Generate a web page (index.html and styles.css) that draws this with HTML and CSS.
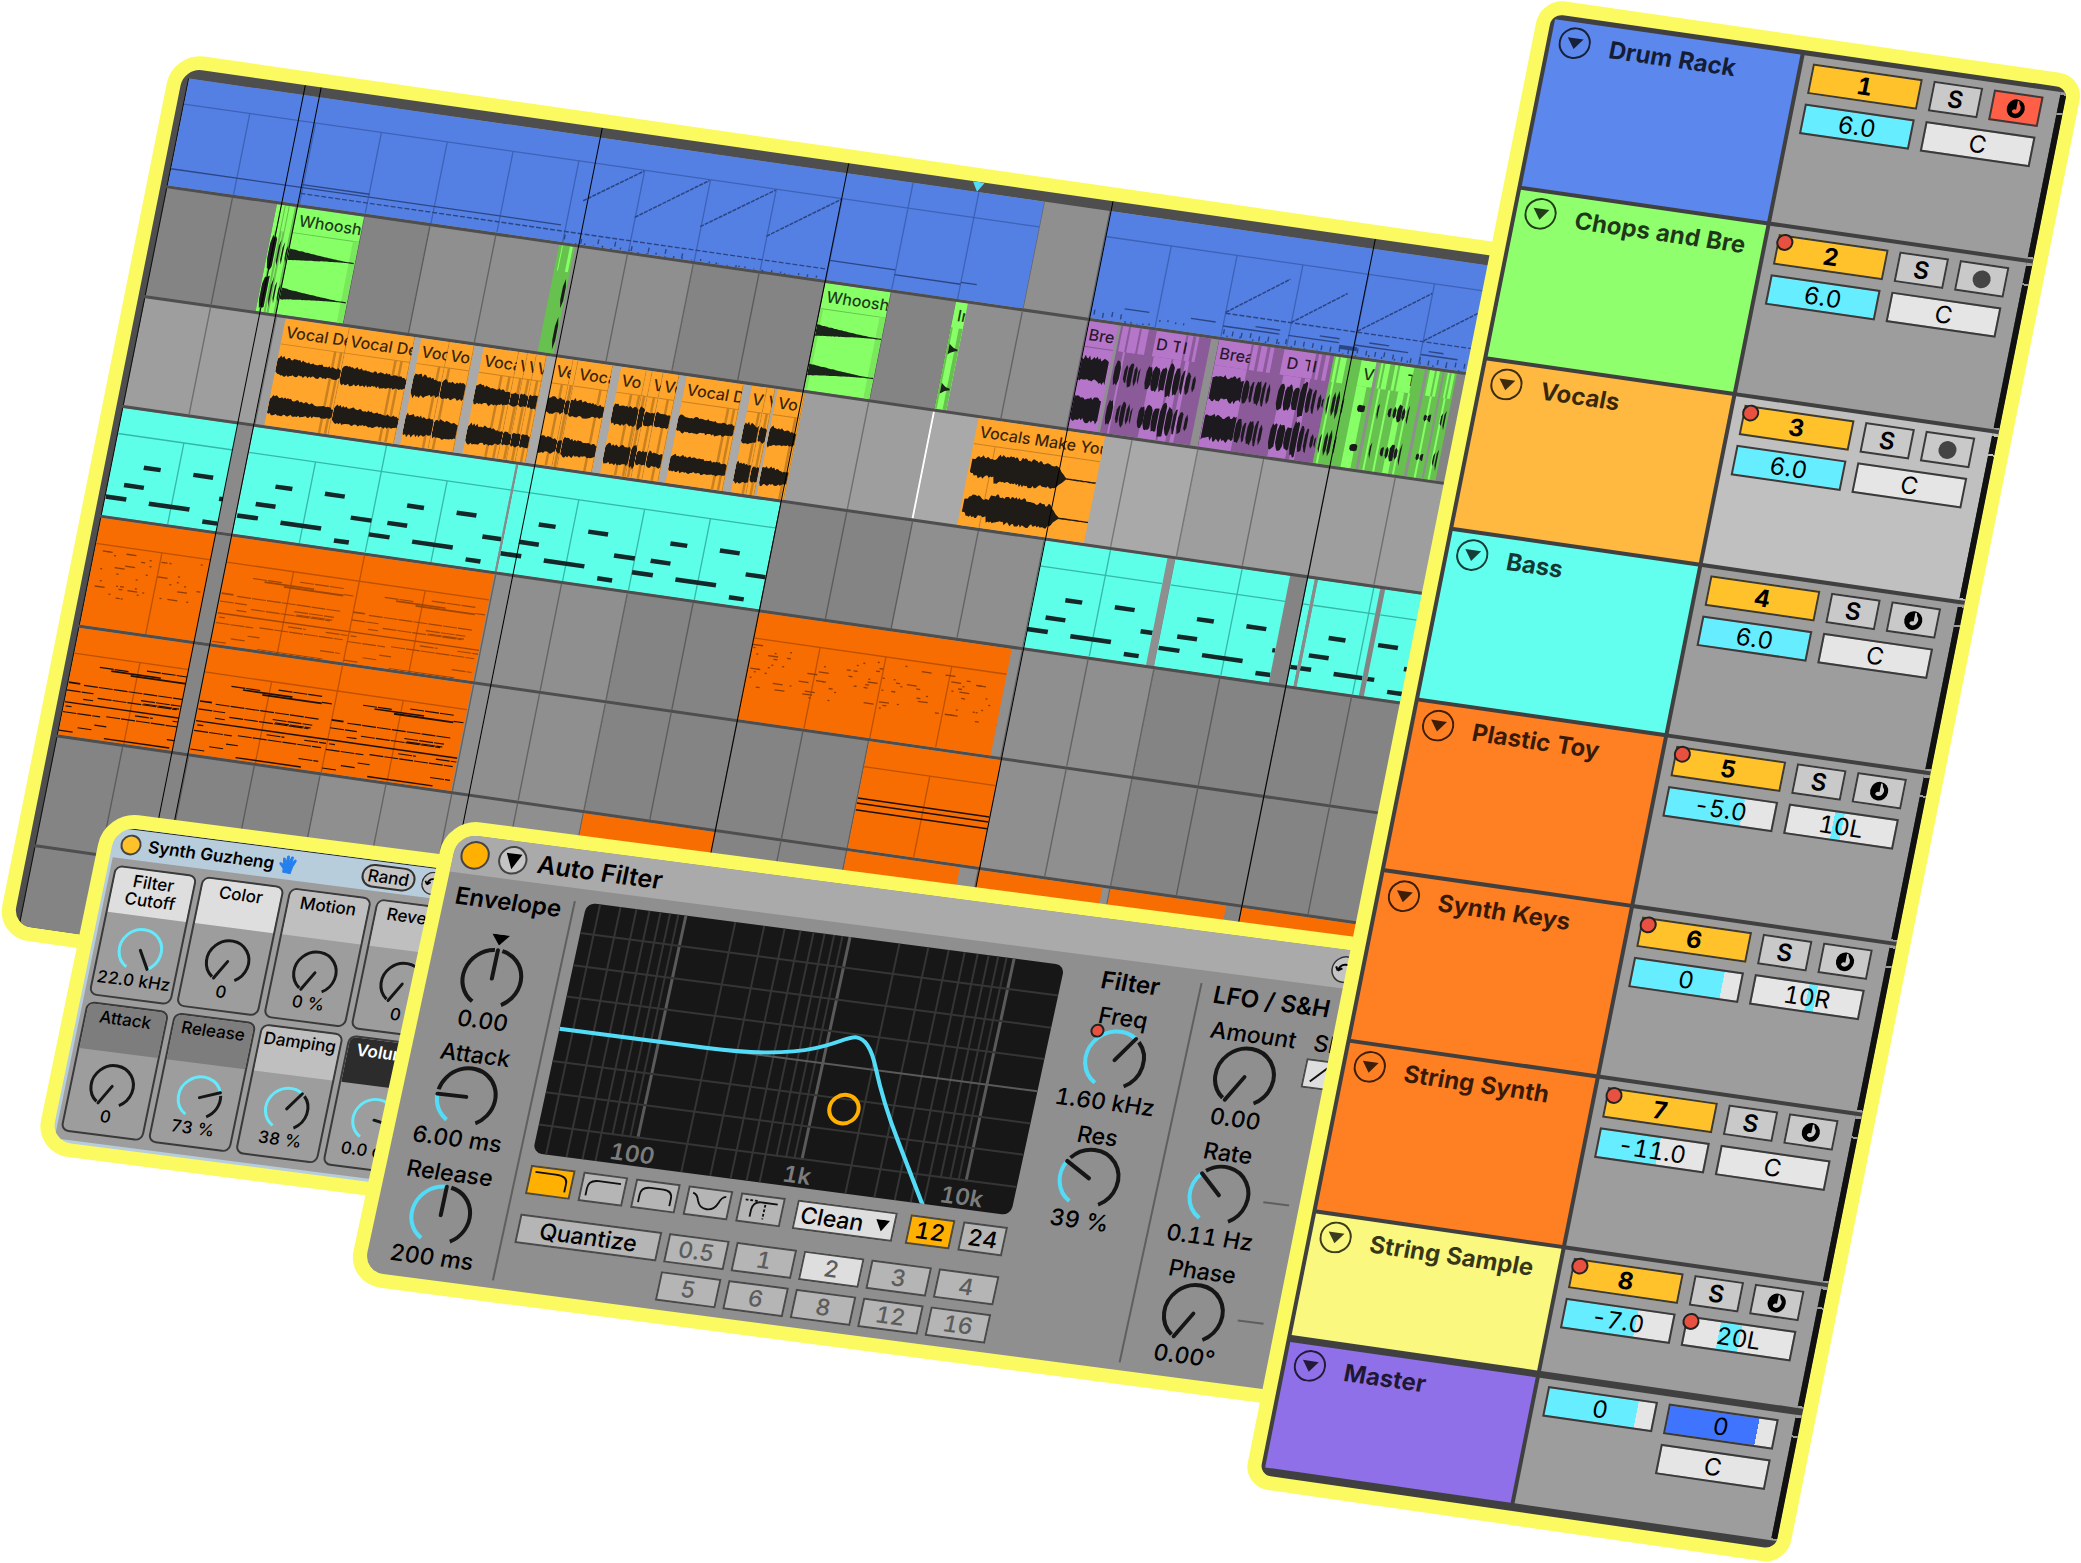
FILE: index.html
```html
<!DOCTYPE html>
<html lang="en">
<head>
<meta charset="utf-8">
<meta name="viewport" content="width=device-width, initial-scale=1">
<title>Live Set</title>
<link rel="stylesheet" href="styles.css">
</head>
<body>
<svg class="defs" aria-hidden="true">
  <symbol id="fold" viewBox="0 0 32 32"><circle cx="16" cy="16" r="15" fill="none" stroke="currentColor" stroke-width="2"/><path d="M8 11H24L16 22Z" fill="currentColor"/></symbol>
  <symbol id="midi" viewBox="0 0 24 24"><ellipse cx="12" cy="12" rx="9" ry="9.500" fill="#000"/><path d="M12.500 4H14Q14.500 7.500 16.500 9.500Q17.500 12 15.500 15Q13.500 17.500 10.500 16.800Q8 16 9 14Q10 12.300 12.500 12.800Z" class="cut"/></symbol>
  <symbol id="rec" viewBox="0 0 24 24"><circle cx="12" cy="12" r="9" fill="#444"/></symbol>
  <symbol id="swap" viewBox="0 0 28 28"><circle cx="14" cy="14" r="13" fill="#c4c4c4" stroke="#333" stroke-width="1.500"/><path d="M7 16Q8 9 14 9T20 15M7 16L4.500 12M7 16L11 13" fill="none" stroke="#000" stroke-width="2"/></symbol>
</svg>
<main class="stage">

  <section class="panel arrangement" aria-label="Arrangement">
    <div class="lane" data-track="drums"></div>
    <div class="lane" data-track="chops"></div>
    <div class="lane lane-selected" data-track="vocals"><i class="cursor"></i></div>
    <div class="lane" data-track="bass"></div>
    <div class="lane" data-track="toy"></div>
    <div class="lane" data-track="keys"></div>
    <div class="lane" data-track="synth"></div>
    <div class="lane lane-last" data-track="sample"></div>
    <div class="locators"></div>
  </section>

  <section class="panel synth" aria-label="Synth Guzheng">
    <header class="synth-head">
      <button class="power power-small" aria-label="Device on"></button>
      <h2>Synth Guzheng</h2>
      <svg class="hand" viewBox="0 0 20 20" aria-hidden="true"><path d="M6 18L5.500 14L1.500 10Q1 8.500 3 9L5.500 11L4 4.500Q4.300 3.200 5.500 4L7.500 9L7.600 2Q8.500.500 9.500 2L10 8.500L11.800 2Q13 1 13.600 2.500L12.700 9L15.500 4.500Q17 4 16.900 5.500L14.800 11L14 15.500L13.500 18.500Z" fill="#2480ee" stroke="#2480ee"/></svg>
      <button class="rand">Rand</button>
      <button class="swap" aria-label="Variations"><svg><use href="#swap"/></svg></button>
    </header>
    <div class="macros">
      <div class="macro tone-light"><h3>Filter Cutoff</h3><svg class="knob" data-angle="150"></svg><output>22.0 kHz</output></div>
      <div class="macro tone-light"><h3>Color</h3><svg class="knob" data-angle="-150"></svg><output>0</output></div>
      <div class="macro tone-mid"><h3>Motion</h3><svg class="knob" data-angle="-150"></svg><output>0 %</output></div>
      <div class="macro tone-mid"><h3>Reverb</h3><svg class="knob" data-angle="-150"></svg><output>0</output></div>
      <div class="macro tone-dark"><h3>Attack</h3><svg class="knob" data-angle="-150"></svg><output>0</output></div>
      <div class="macro tone-dark"><h3>Release</h3><svg class="knob" data-angle="69"></svg><output>73 %</output></div>
      <div class="macro tone-mid"><h3>Damping</h3><svg class="knob" data-angle="36"></svg><output>38 %</output></div>
      <div class="macro tone-black"><h3>Volume</h3><svg class="knob" data-angle="100"></svg><output>0.0 dB</output></div>
    </div>
  </section>

  <section class="panel filter" aria-label="Auto Filter">
    <header class="filter-head">
      <button class="power" aria-label="Device on"></button>
      <button class="fold-device" aria-label="Fold device"><svg viewBox="0 0 30 30"><path d="M6 7H25L15.500 26Z"/></svg></button>
      <h2>Auto Filter</h2>
      <button class="swap" aria-label="Hot swap"><svg><use href="#swap"/></svg></button>
    </header>
    <div class="filter-body">
      <div class="col envelope">
        <h3>Envelope</h3>
        <div class="dial"><span class="mark"><svg viewBox="0 0 18 11"><path d="M0 0H18L9 11Z"/></svg></span><svg class="knob" data-angle="0" data-bipolar="1"></svg><output>0.00</output></div>
        <div class="dial"><span>Attack</span><svg class="knob" data-angle="-91"></svg><output>6.00 ms</output></div>
        <div class="dial"><span>Release</span><svg class="knob" data-angle="0"></svg><output>200 ms</output></div>
      </div>
      <div class="col response">
        <svg class="display" viewBox="0 0 482 256" role="img" aria-label="Filter response"></svg>
        <div class="types">
          <button class="on" aria-label="Low pass"><svg viewBox="0 0 42 28"><path d="M3 5H25Q38 5 38 13V23"/></svg></button>
          <button aria-label="High pass"><svg viewBox="0 0 42 28"><path d="M4 23V15Q4 6 15 6H39"/></svg></button>
          <button aria-label="Band pass"><svg viewBox="0 0 42 28"><path d="M4 23V15Q4 6 14 6H28Q38 6 38 15V23"/></svg></button>
          <button aria-label="Notch"><svg viewBox="0 0 42 28"><path d="M3 5Q8 6 10 13Q13 21 21 21T32 13Q34 6 39 5"/></svg></button>
          <button aria-label="Morph"><svg viewBox="0 0 42 28"><path d="M11 23V15Q12 6 20 6H38"/><path d="M3 5H16M25 8V24" stroke-dasharray="3 2"/></svg></button>
          <label class="circuit"><select aria-label="Circuit"><option>Clean</option><option>OSR</option></select><svg viewBox="0 0 14 12"><path d="M0 0H14L7 12Z"/></svg></label>
          <button class="on slope-12">12</button>
          <button>24</button>
        </div>
        <div class="quantize">
          <button class="quantize-label">Quantize</button>
          <button class="step">0.5</button><button class="step">1</button><button class="step picked">2</button><button class="step">3</button><button class="step">4</button>
          <button class="step first">5</button><button class="step">6</button><button class="step">8</button><button class="step">12</button><button class="step">16</button>
        </div>
      </div>
      <div class="col cutoff">
        <h3>Filter</h3>
        <div class="dial"><span>Freq</span><i class="dot"></i><svg class="knob" data-angle="35"></svg><output>1.60 kHz</output></div>
        <div class="dial"><span>Res</span><svg class="knob" data-angle="-60"></svg><output>39 %</output></div>
      </div>
      <div class="col lfo">
        <h3>LFO / S&amp;H</h3>
        <div class="dial"><span>Amount</span><svg class="knob" data-angle="-150"></svg><output>0.00</output></div>
        <div class="dial"><span>Rate</span><svg class="knob" data-angle="-47"></svg><output>0.11 Hz</output></div>
        <div class="dial"><span>Phase</span><svg class="knob" data-angle="-150"></svg><output>0.00°</output></div>
      </div>
      <div class="shape">
        <span>Shape</span>
        <button aria-label="Waveform"><svg viewBox="0 0 42 28"><path d="M6 22L21 6L36 22"/></svg></button>
        <hr><hr>
      </div>
    </div>
  </section>

  <section class="panel mixer" aria-label="Tracks">
    <article class="track c-blue">
      <div class="title"><button class="fold" aria-label="Fold"><svg><use href="#fold"/></svg></button><h2>Drum Rack</h2></div>
      <div class="strip"><button class="act">1</button><button class="solo">S</button><button class="arm armed" aria-label="Arm"><svg><use href="#midi"/></svg></button><input class="num full" aria-label="Volume" value="6.0"><input class="num pan" aria-label="Pan" value="C"></div><i class="meter"></i>
    </article>
    <article class="track c-green">
      <div class="title"><button class="fold" aria-label="Fold"><svg><use href="#fold"/></svg></button><h2>Chops and Bre</h2></div>
      <div class="strip"><button class="act auto">2</button><button class="solo">S</button><button class="arm" aria-label="Arm"><svg><use href="#rec"/></svg></button><input class="num full" aria-label="Volume" value="6.0"><input class="num pan" aria-label="Pan" value="C"></div><i class="meter"></i>
    </article>
    <article class="track c-amber selected">
      <div class="title"><button class="fold" aria-label="Fold"><svg><use href="#fold"/></svg></button><h2>Vocals</h2></div>
      <div class="strip"><button class="act auto">3</button><button class="solo">S</button><button class="arm" aria-label="Arm"><svg><use href="#rec"/></svg></button><input class="num full" aria-label="Volume" value="6.0"><input class="num pan" aria-label="Pan" value="C"></div><i class="meter"></i>
    </article>
    <article class="track c-aqua">
      <div class="title"><button class="fold" aria-label="Fold"><svg><use href="#fold"/></svg></button><h2>Bass</h2></div>
      <div class="strip"><button class="act">4</button><button class="solo">S</button><button class="arm" aria-label="Arm"><svg><use href="#midi"/></svg></button><input class="num full" aria-label="Volume" value="6.0"><input class="num pan" aria-label="Pan" value="C"></div><i class="meter"></i>
    </article>
    <article class="track c-orange">
      <div class="title"><button class="fold" aria-label="Fold"><svg><use href="#fold"/></svg></button><h2>Plastic Toy</h2></div>
      <div class="strip"><button class="act auto">5</button><button class="solo">S</button><button class="arm" aria-label="Arm"><svg><use href="#midi"/></svg></button><input class="num" style="--to:71%" aria-label="Volume" value="-5.0"><input class="num pan" style="--from:42%;--to:51%" aria-label="Pan" value="10L"></div><i class="meter"></i>
    </article>
    <article class="track c-orange">
      <div class="title"><button class="fold" aria-label="Fold"><svg><use href="#fold"/></svg></button><h2>Synth Keys</h2></div>
      <div class="strip"><button class="act auto">6</button><button class="solo">S</button><button class="arm" aria-label="Arm"><svg><use href="#midi"/></svg></button><input class="num" style="--to:84%" aria-label="Volume" value="0"><input class="num pan" style="--from:50%;--to:58%" aria-label="Pan" value="10R"></div><i class="meter"></i>
    </article>
    <article class="track c-orange">
      <div class="title"><button class="fold" aria-label="Fold"><svg><use href="#fold"/></svg></button><h2>String Synth</h2></div>
      <div class="strip"><button class="act auto">7</button><button class="solo">S</button><button class="arm" aria-label="Arm"><svg><use href="#midi"/></svg></button><input class="num" style="--to:56%" aria-label="Volume" value="-11.0"><input class="num pan" aria-label="Pan" value="C"></div><i class="meter"></i>
    </article>
    <article class="track c-yellow">
      <div class="title"><button class="fold" aria-label="Fold"><svg><use href="#fold"/></svg></button><h2>String Sample</h2></div>
      <div class="strip"><button class="act auto">8</button><button class="solo">S</button><button class="arm" aria-label="Arm"><svg><use href="#midi"/></svg></button><input class="num" style="--to:67%" aria-label="Volume" value="-7.0"><span class="automated"><input class="num pan" style="--from:31%;--to:51%" aria-label="Pan" value="20L"></span></div><i class="meter"></i>
    </article>
    <article class="track c-violet master">
      <div class="title"><button class="fold" aria-label="Fold"><svg><use href="#fold"/></svg></button><h2>Master</h2></div>
      <div class="strip"><input class="num" style="--to:84%" aria-label="Volume" value="0"><input class="num cue" style="--to:84%" aria-label="Cue volume" value="0"><input class="num pan master-pan" aria-label="Pan" value="C"></div><i class="meter"></i>
    </article>
  </section>

</main>
<script src="app.js"></script>
</body>
</html>
```

FILE: styles.css
```css
* { box-sizing: border-box; }
body { margin: 0; background: #fff; color: #000; font-family: Inter, "Liberation Sans", sans-serif; font-variant-numeric: tabular-nums; }
h2, h3 { margin: 0; font-weight: 600; }
button, input, select { font: inherit; color: inherit; padding: 0; margin: 0; border-radius: 0; }
button { display: grid; place-items: center; cursor: pointer; }
.defs { position: absolute; width: 0; height: 0; }
.stage { position: relative; min-height: 100vh; overflow: hidden; }

/* Windows float on a free canvas, each with its own tilt. */
.panel { position: absolute; border: 14px solid #fcfa61; transform-origin: 0 0; overflow: hidden; }

/* Arrangement */
.arrangement {
  left: 173px; top: 52px; width: 1368px; padding: 10px 0 0 6px;
  border-radius: 32px; background: #4e4e4e;
  transform: matrix(.9898, .1423, -.1961, .9806, 0, 0);
}
.lane {
  position: relative; height: 109px; margin-bottom: 3px; border-left: 1px solid #111; overflow: hidden;
  background: repeating-linear-gradient(90deg, #848484 0 266px, #8f8f8f 266px 532px);
}
.lane-selected { background: repeating-linear-gradient(90deg, #9e9e9e 0 266px, #a9a9a9 266px 532px); }
.lane-last { height: 80px; margin-bottom: 0; }
.grid-lines { position: absolute; left: 0; top: 0; width: 100%; height: 100%; }
.cursor { position: absolute; left: 796px; top: 0; z-index: 1; width: 2px; height: 100%; background: #fff; }
.clip { position: absolute; top: 0; height: 109px; overflow: hidden; }
.clip svg { position: absolute; left: 0; top: 0; display: block; }
.clip span { position: absolute; top: 0; font-size: 16px; font-weight: 500; line-height: 26px; white-space: nowrap; overflow: hidden; color: rgba(0, 0, 0, .78); }
.locators { position: absolute; inset: 0; pointer-events: none; }
.locators i { position: absolute; top: 0; bottom: 0; width: 1px; background: #000; }
.locators svg { position: absolute; top: 0; left: 797px; width: 12px; height: 10px; fill: #53dcf8; }

/* Shared device parts */
.power { width: 29px; height: 29px; border: 2px solid #444; border-radius: 50%; background: #ffb000; }
.power-small { width: 21px; height: 21px; background: #ffc22b; }
.knob { display: block; overflow: visible; fill: none; stroke-linecap: butt; }
.knob .track-arc, .knob .hand-line { stroke: #161616; }
.knob .hand-line { stroke-linecap: round; }
.knob .value-arc { stroke: #53dcf8; }
.swap { border: 0; background: none; }
.swap svg { width: 28px; height: 28px; }

/* Synth rack */
.synth {
  left: 105px; top: 811px; width: 420px; border-radius: 34px; padding: 0 0 3px 3px;
  background: #b8cddb; font-size: 17px; font-weight: 500;
  transform: matrix(.9918, .1279, -.2027, .9792, 0, 0);
}
.synth-head { display: flex; align-items: center; height: 31px; padding-left: 5px; border-top: 1px solid #222; }
.synth-head h2 { margin-left: 7px; font-size: 17px; }
.hand { width: 20px; height: 20px; margin-left: 4px; }
.rand { width: 54px; height: 24px; margin-left: auto; border: 2px solid #333; border-radius: 12px; background: #c4c4c4; line-height: 20px; }
.synth .swap { margin: 0 57px 0 6px; }
.synth .swap svg { width: 24px; height: 24px; }
.macros { display: grid; grid-template-columns: repeat(4, 83px); gap: 6px 5px; padding: 7px 0 8px 4px; background: #9d9d9d; }
.macro { height: 133px; border: 2px solid #3a3a3a; border-radius: 8px; overflow: hidden; background: #9d9d9d; text-align: center; }
.macro h3 { height: 46px; padding: 3px 8px 0; font-size: 17px; line-height: 18px; font-weight: 500; }
.macro .knob { width: 44px; height: 42px; margin: 13px auto 0; }
.macro .knob .value-arc { stroke: #66e9fb; }
.macro output { display: block; line-height: 20px; white-space: nowrap; }
.tone-light h3 { background: #dedede; }
.tone-mid h3 { background: #bfbfbf; padding-inline: 0; }
.tone-dark h3 { background: #7d7d7d; }
.tone-black h3 { background: #2c2c2c; color: #fff; font-weight: 600; }

/* Auto Filter */
.filter {
  left: 447px; top: 818px; width: 1028px; border-radius: 34px; background: #8f8f8f; font-size: 23px; font-weight: 500;
  transform: matrix(.9916, .1297, -.2112, .9774, 0, 0);
}
.filter-head { display: flex; align-items: center; gap: 9px; height: 39px; padding-left: 7px; background: #aaa; }
.filter-head h2 { margin-left: 2px; font-size: 25px; }
.filter-head .swap { margin-left: 666px; }
.fold-device { width: 29px; height: 29px; border: 2px solid #444; border-radius: 50%; background: #c4c4c4; }
.fold-device svg { width: 25px; height: 25px; }
.filter-body { display: flex; height: 409px; padding-top: 9px; }
.col h3 { font-size: 24px; line-height: 28px; white-space: nowrap; margin-bottom: 7px; }
.dial { position: relative; display: grid; justify-items: center; grid-template-rows: 28px 58px 28px; margin-bottom: 7px; line-height: 28px; white-space: nowrap; }
.dial .knob { width: 64px; height: 58px; }
.dial .mark { display: grid; align-self: end; margin-bottom: 5px; }
.mark svg { width: 18px; height: 11px; }
.envelope, .lfo { height: 388px; margin-top: 4px; }
.envelope { width: 130px; border-right: 2px solid #5f5f5f; text-align: center; }
.envelope h3, .lfo h3 { margin-top: -4px; }
.response { width: 482px; margin: 4px 0 0 11px; }
.display { display: block; width: 482px; height: 256px; border-radius: 9px; background: #171717; }
.types { display: flex; gap: 8px; margin: 12px 0 20px 1px; height: 30px; }
.types button, .quantize button, .shape button { border: 2px solid #4a4a4a; background: #b5b5b5; }
.types button { width: 45px; height: 30px; line-height: 26px; }
.types svg, .shape svg { fill: none; stroke: #111; stroke-width: 2; }
.types button svg { width: 41px; height: 26px; }
.types .on { background: #ffb000; }
.types .slope-12 { margin-left: 5px; }
.circuit { display: grid; width: 101px; margin-left: 4px; }
.circuit select { grid-area: 1 / 1; appearance: none; border: 2px solid #4a4a4a; background: #dedede; padding-left: 4px; line-height: 26px; }
.circuit svg { grid-area: 1 / 1; justify-self: end; align-self: center; width: 14px; height: 12px; margin-right: 6px; fill: #000; stroke: none; pointer-events: none; }
.quantize { display: grid; grid-template-columns: 143px repeat(5, 61px); gap: 9px 7px; margin-left: 1px; }
.quantize button { height: 30px; line-height: 26px; }
.quantize .step { color: #5c5c5c; }
.quantize .picked { background: #dedede; }
.quantize .first { grid-column: 2; }
.cutoff { width: 137px; text-align: center; }
.dot { position: absolute; left: 39px; top: 23px; z-index: 1; width: 14px; height: 14px; border: 2px solid #222; border-radius: 50%; background: #e8503f; }
.lfo { width: 124px; border-left: 2px solid #5f5f5f; }
.lfo h3 { padding-left: 13px; }
.shape { width: 80px; padding-top: 35px; line-height: 28px; }
.shape button { width: 46px; height: 30px; margin: 2px 0 118px -4px; background: #dedede; }
.shape hr { width: 26px; height: 2px; margin: 0 0 119px -16px; border: 0; background: #5f5f5f; }

/* Mixer */
.mixer {
  left: 1541px; top: -2px; width: 549px; padding: 5px 0 8px 4px; border-radius: 25px;
  display: flex; flex-direction: column; gap: 4px; background: #404040; font-size: 24px;
  transform: matrix(.9898, .1426, -.1963, .9805, 0, 0);
}
.track { position: relative; display: grid; grid-template-columns: 252px 1fr 6px; height: 170px; }
.title { display: flex; gap: 19px; padding: 5px 0 0 8px; margin-right: 4px; background: var(--color); overflow: hidden; }
.title h2 { padding-top: 4px; font-size: 24px; line-height: 28px; font-weight: 700; white-space: nowrap; color: rgba(0, 0, 0, .78); }
.fold { width: 32px; height: 32px; border: 0; background: none; color: rgba(0, 0, 0, .76); }
.fold svg { width: 32px; height: 32px; }
.strip { display: grid; grid-template: 31px 31px / 111px 50px 50px; gap: 10px 11px; padding: 7px 0 0 10px; background: #9d9d9d; }
.selected .strip { background: #c0c0c0; }
.act, .solo, .arm, .num { border: 2px solid #3a3a3a; width: 100%; height: 31px; line-height: 27px; text-align: center; }
.act { position: relative; background: #ffc22b; font-weight: 700; }
.solo { background: #c9c9c9; font-weight: 600; }
.arm { background: #c9c9c9; --cut: #c9c9c9; }
.armed { background: #ff5f47; --cut: #ff5f47; }
.arm svg { width: 24px; height: 24px; }
.cut { fill: var(--cut); }
.num {
  display: block; min-width: 0;
  background: linear-gradient(90deg, #e5e5e5 var(--from, 0%), #66edff var(--from, 0%) var(--to, 0%), #e5e5e5 var(--to, 0%));
}
.full { --to: 100%; }
.pan, .automated { grid-column: 2 / 4; }
.automated { position: relative; }
.auto::before, .automated::before {
  content: ""; position: absolute; left: -3px; top: -3px; width: 13px; height: 13px;
  border: 2px solid #222; border-radius: 50%; background: #e8503f;
}
.meter {
  --gap: #9d9d9d;
  background: linear-gradient(var(--gap) 0 3px, #111 3px 21px, var(--gap) 21px 23px, #111 23px calc(100% - 2px), var(--gap) calc(100% - 2px));
}
.selected .meter { --gap: #c0c0c0; }
.c-blue { --color: #5c87ec; }
.c-green { --color: #8fff6e; }
.c-amber { --color: #ffb940; }
.c-aqua { --color: #63ffee; }
.c-orange { --color: #ff7f23; }
.c-yellow { --color: #faf87f; height: 124px; }
.c-violet { --color: #8f70e8; height: 128px; }
.master { margin-top: 3px; }
.cue { grid-column: 2 / 4; background: linear-gradient(90deg, #3f74ff var(--to), #e5e5e5 var(--to)); }
.master-pan { grid-row: 2; }
```

FILE: app.js
```javascript
const BAR = 66.5, H = 109, HEAD = 26;
let seed = 7;
const rnd = () => (seed = (seed * 16807) % 2147483647) / 2147483647;
const rect = (x, y, w, h, fill) => `<rect x="${x}" y="${y}" width="${w}" height="${h}" fill="${fill}"/>`;
const path = (d, stroke, w, extra = '') => `<path d="${d}" fill="none" stroke="${stroke}" stroke-width="${w}" ${extra}/>`;

/* Bar lines behind the clips */
for (const lane of document.querySelectorAll('.lane')) {
  let d = '';
  for (let k = 1; k <= 20; k++) d += `M${k * BAR - .5} 0V${H}`;
  lane.insertAdjacentHTML('afterbegin', `<svg class="grid-lines">${path(d, 'rgba(0,0,0,.3)', 1.4)}</svg>`);
}

/* A two-channel waveform: top and bottom edges follow the envelope env(t). */
function wave(x, w, env, fill = '#1f1b16', rough = .22) {
  let out = '';
  for (const cy of [48, 88]) {
    const up = [], down = [];
    for (let i = 0; i <= w; i += 1.5) {
      const a = env(i / w);
      up.push(`${(x + i).toFixed(1)},${(cy - a * (1 - rough * rnd())).toFixed(1)}`);
      down.unshift(`${(x + i).toFixed(1)},${(cy + a * (1 - rough * rnd())).toFixed(1)}`);
    }
    out += `<polygon points="${up.concat(down).join(' ')}" fill="${fill}"/>`;
  }
  return out;
}
const word = (a, b) => t => (a + (b - a) * t) * Math.min(1, 8 * t + .7, 6 * (1 - t) + .7);

function addClip(track, x, w, color, art = '', labels = []) {
  const lane = document.querySelector(`[data-track="${track}"]`);
  const el = document.createElement('div');
  el.className = 'clip';
  el.style.cssText = `left:${x}px;width:${w}px;background:${color}`;
  el.innerHTML = `<svg width="${w}" height="${H}">${art}</svg>` +
    labels.map(([lx, lw, t]) => `<span style="left:${lx}px;width:${lw}px">${t}</span>`).join('');
  lane.append(el);
}
function bars(x, w, stroke, full = []) {
  let out = path(`M0 ${HEAD}H${w}`, stroke, 1.3);
  for (let k = Math.ceil((x + 2) / BAR); k * BAR < x + w - 2; k++)
    out += path(`M${k * BAR - x} ${full.includes(k) ? 0 : HEAD}V${H}`, stroke, 1.3);
  return out;
}

/* Drums */
const INK = '#2c4685';
function ramp(x0, y0, x1, y1) { return path(`M${x0} ${y0}L${x1} ${y1}`, INK, 1.6, 'stroke-dasharray="4 1"'); }
function ticks(a, b, y, step, len) {
  let d = '';
  for (let i = a; i < b; i += step) d += `M${i} ${y + (rnd() * 3 | 0)}v${len}`;
  return path(d, INK, 1.4);
}
addClip('drums', 0, 864, '#5480e3', bars(0, 864, '#3d62b8', [11, 12]) +
  path('M0 92H394M132 89H200M665 89H731M731 94H798M798 92H814', INK, 1.3) +
  path('M132 98H664', INK, 1.4, 'stroke-dasharray="5 2"') +
  ramp(411, 65, 465, 27) + ramp(465, 74, 531, 27) + ramp(531, 74, 598, 27) + ramp(598, 74, 664, 27) +
  ticks(400, 532, 101, 17, 5) + ticks(412, 660, 106, 9, 2) + ticks(416, 660, 107, 23, 2));
addClip('drums', 931, 403, '#5480e3', bars(931, 403, '#3d62b8') +
  ramp(133, 84, 190, 42) + ramp(199, 85, 249, 48) + ramp(266, 84, 332, 36) + ramp(333, 84, 399, 36) +
  path('M133 85H403', INK, 1.4, 'stroke-dasharray="5 2"') +
  path('M33 95H58M100 95H125M133 98H190M165 94H190M199 98H250M230 94H250M266 98H320M280 94H300M333 98H370M340 94H355', INK, 1.4) +
  ticks(4, 35, 100, 9, 5) + ticks(36, 66, 106, 6, 2) + ticks(70, 100, 100, 8, 2) + ticks(135, 403, 101, 9, 5) + ticks(139, 403, 106, 13, 2) +
  rect(251, 100, 18, 4, INK));

/* Chops */
const G = '#87ff67', GD = '#66c14e', P = '#b575c9', PD = '#8a5a99';
const fadeOut = t => 5.6 * Math.pow(Math.max(0, 1 - t * 1.15), 1.2) + .6;
const stripes = (list, fill, y = 0, h = H) => list.map(([x, w]) => rect(x, y, w, h, fill)).join('');
const hits = list => list.map(([x, w, a]) => wave(x, w, t => a * Math.min(1, 3 * t + .5, 3 * (1 - t) + .5), '#1c1a1e')).join('');
addClip('chops', 111, 21, GD, stripes([[0, 3], [5, 3], [10, 1], [13, 5]], G) + stripes([[0, 18]], G, 0, HEAD) +
  stripes([[4, 1], [8, 1], [12, 1]], GD, 0, HEAD) + hits([[1, 7, 18], [10, 2, 16], [14, 2, 14], [18, 2, 10]]));
addClip('chops', 132, 67, G, path(`M0 ${HEAD}H67`, GD, 1) + rect(61, 26, 6, 83, '#79e85c') + wave(0, 67, fadeOut, '#1b241a', .1), [[4, 63, 'Whoosh']]);
addClip('chops', 396, 16, GD, stripes([[3, 1], [11, 3]], G, 0, HEAD) + hits([[12, 3, 17], [6, 1, 6]]));
addClip('chops', 665, 66, G, path(`M0 ${HEAD}H66`, GD, 1) + stripes([[0, 3], [60, 6]], '#79e85c', 26) + wave(0, 66, fadeOut, '#1b241a', .1), [[4, 62, 'Whoosh']]);
addClip('chops', 797, 12, G, stripes([[0, 2], [8, 4]], GD, 26) + wave(2, 10, t => 5 * (1 - t) * (1 - t) + .8, '#1b241a', .1), [[4, 8, 'Ir']]);
addClip('chops', 931, 30, P, path(`M0 ${HEAD}H30`, PD, 1) + wave(1, 28, () => 14, '#1c1a1e', .35), [[3, 27, 'Bre']]);
addClip('chops', 964, 91, PD, stripes([[2, 6], [10, 9], [21, 7], [36, 30], [68, 5], [76, 3]], P, 0, HEAD) + stripes([[7, 2], [38, 18], [58, 8], [70, 4]], P, 26) +
  hits([[2, 6, 13], [12, 4, 10], [16, 5, 14], [22, 3, 12], [26, 2, 10], [34, 6, 12], [40, 8, 14], [48, 7, 13], [55, 7, 18], [62, 6, 15], [69, 4, 13], [74, 5, 12], [81, 3, 10]]),
  [[38, 14, 'D'], [54, 8, 'T'], [65, 6, 'l']]);
addClip('chops', 1063, 116, PD, stripes([[0, 33], [35, 5], [43, 6], [52, 4], [66, 32], [101, 3], [108, 4]], P, 0, HEAD) + stripes([[0, 33], [70, 18], [92, 5]], P, 26) +
  wave(1, 32, () => 14, '#1c1a1e', .35) + hits([[33, 6, 13], [40, 4, 11], [45, 6, 13], [52, 4, 15], [57, 3, 12], [64, 1, 16], [68, 7, 14], [75, 8, 14], [83, 7, 13], [90, 7, 19], [97, 5, 15], [103, 4, 14], [109, 3, 9], [113, 2, 6]]),
  [[3, 31, 'Brea'], [71, 14, 'D'], [88, 6, 'T'], [97, 5, 'l']]);
addClip('chops', 1179, 124, GD, stripes([[2, 3], [7, 6], [28, 15], [48, 2], [52, 5], [62, 3], [67, 14], [97, 5], [104, 3], [115, 2], [119, 3]], G, 0, HEAD) +
  stripes([[3, 2], [28, 10], [50, 2], [60, 2], [70, 6], [80, 2], [102, 2], [116, 2]], G, 26) + stripes([[43, 3], [92, 3], [110, 2]], '#8f8f8f') +
  hits([[2, 2, 12], [7, 3, 14], [11, 3, 16], [17, 2, 10], [33, 8, 4], [53, 2, 9], [57, 1, 12], [64, 4, 5], [69, 3, 7], [73, 5, 10], [78, 3, 7], [83, 2, 12], [100, 3, 4], [104, 4, 4], [117, 2, 8], [120, 2, 12]]),
  [[32, 11, 'V'], [76, 5, 'T']]);

/* Vocals: [x, width, label, starts of the shaded fades, level at start, level at end] */
const O = '#ffa52b', OD = '#c98021';
const vox = [
  [142, 65, 'Vocal De', [54, 60], 11, 6], [207, 66, 'Vocal De', [50, 56], 11, 7], [279, 29, 'Voc', [22], 14, 9], [308, 25, 'Vo', [3], 11, 9],
  [342, 36, 'Voca', [22, 30], 12, 8], [378, 9, 'V', [5], 8, 7], [387, 9, 'V', [4], 8, 7], [396, 10, 'V', [4], 8, 7],
  [415, 18, 'Ve', [10], 10, 8], [433, 5, '', [1], 8, 8], [438, 35, 'Voca', [26], 11, 7], [481, 26, 'Vo', [14, 22], 12, 10], [507, 6, '', [1], 13, 13], [513, 11, 'V', [5], 8, 8], [524, 16, 'Ve', [8], 9, 8],
  [547, 58, 'Vocal D', [46, 52], 10, 7], [613, 16, 'V', [11], 13, 9], [629, 8, 'V', [3], 9, 8], [639, 28, 'Vo', [22], 12, 7]];
for (const [x, w, t, fades, a, b] of vox)
  addClip('vocals', x, w, O, path(`M0 ${HEAD}H${w}M${w - .5} 0V${H}`, OD, 1) + stripes(fades.map(f => [f, 2.5]), OD, 26) +
    wave(0, w, word(a, b), '#1f1b16', .3), t ? [[3, w - 3, t]] : []);
addClip('vocals', 842, 128, O, path(`M0 ${HEAD}H128M22 ${HEAD}V${H}`, OD, 1) +
  wave(2, 126, t => t < .03 ? 8 : t < .12 ? 12 : t < .2 ? 10 : t < .55 ? 15 : t < .68 ? 13 : t < .76 ? 13 - 12 * (t - .68) / .08 : .8, '#1f1b16', .25), [[4, 124, 'Vocals Make You']]);
for (const [x, w] of [[273, 6], [333, 9], [406, 9], [473, 8], [540, 7], [605, 8], [637, 2]]) addClip('vocals', x, w, '#a9a9a9');

/* Bass: a two-bar phrase that repeats */
const phrase = [[0, 88, 21], [16, 74, 20], [32, 54, 17], [44, 89, 41], [82, 54, 20], [100, 99, 15], [112, 74, 21]];
function bass(x, w, full) {
  let out = bars(x, w, '#35b8a8', full);
  for (let s = Math.floor((x + 1) / 133) * 133; s < x + w; s += 133)
    for (const [px, py, pw] of phrase) out += rect(s + px - x, py, pw, 4.5, '#14282a');
  addClip('bass', x, w, '#5dffe8', out);
}
bass(0, 116); bass(132, 265, [4]); bass(399, 265);
bass(931, 124, [15]); bass(1063, 116, [17]); bass(1197, 7); bass(1207, 63, [19]); bass(1275, 60);
for (const [x, w] of [[116, 16], [397, 2], [1204, 3]]) addClip('bass', x, w, '#8a8a8a');

/* Chords and scattered notes */
const chords = [[28, 36, 30, 1], [40, 38, 50, 1.4], [60, 40, 60, 1.6], [75, 33, 45, 1], [120, 39, 10, 1], [0, 55, 12, 1.5], [16, 56, 104, 1], [0, 63, 27, 1], [18, 70, 10, 1], [32, 67, 80, 1], [75, 63, 40, 1], [78, 66, 36, 1],
  [0, 75, 133, 1.2], [2, 79, 6, 1], [0, 85, 38, 1], [44, 84, 84, 1], [72, 79, 18, 1], [110, 79, 22, 1], [0, 104, 15, 1], [18, 99, 14, 1], [34, 94, 12, 1], [46, 106, 66, 1.2], [108, 98, 20, 1]];
function notes(track, x, w, ink, dy = 0, full = []) {
  let out = bars(x, w, '#bd5100', full);
  for (let s = Math.floor((x + 1) / 133) * 133; s < x + w; s += 133)
    for (const [px, py, pw, ph] of chords) out += path(`M${s + px - x} ${py + dy + .5}h${pw}`, ink, ph * 1.15, ph === 1 ? 'stroke-dasharray="14 1"' : '');
  addClip(track, x, w, '#f76d02', out);
}
function scatter(track, x, w) {
  let out = bars(x, w, '#bd5100');
  for (let i = 0; i < w / 3; i++) {
    const px = rnd() * w, len = [2, 2, 4, 10][rnd() * 4 | 0];
    out += path(`M${px.toFixed(0)} ${32.5 + (rnd() * 16 | 0) * 3}h${len}`, '#8f3d00', 1.3);
  }
  addClip(track, x, w, '#f76d02', out);
}
scatter('toy', 0, 116); notes('toy', 132, 265, '#a04600', 2, [4]); scatter('toy', 664, 256);
notes('keys', 0, 116, '#1c1008'); notes('keys', 132, 265, '#1c1008', 0, [4]);
addClip('keys', 798, 133, '#f76d02', bars(798, 133, '#bd5100') + path('M0 58H133M0 63H133M0 70H133', '#1c1008', 1.5));
for (const t of ['toy', 'keys']) addClip(t, 116, 16, '#858585');
for (const [x, w] of [[532, 133], [798, 114], [931, 125], [1064, 117], [1197, 137]]) addClip('synth', x, w, '#f76d02');

document.querySelector('.locators').innerHTML =
  [122, 138, 422, 671, 938, 1203].map(x => `<i style="left:${x}px"></i>`).join('') + '<svg viewBox="0 0 12 10"><path d="M0 0H12L6 10Z"/></svg>';

/* Knobs sweep 300 degrees, from -150 to 150 */
for (const k of document.querySelectorAll('.knob')) {
  const a = +k.dataset.angle, big = k.closest('.filter'), r = big ? 29 : 21, sw = big ? 4 : 3;
  const pt = (deg, rad) => [rad * Math.sin(deg * Math.PI / 180), -rad * Math.cos(deg * Math.PI / 180)].map(n => n.toFixed(2)).join(' ');
  const arc = (from, to, cls) => to - from < 2 ? '' : `<path class="${cls}" stroke-width="${sw}" d="M${pt(from, r)}A${r} ${r} 0 ${to - from > 180 ? 1 : 0} 1 ${pt(to, r)}"/>`;
  k.setAttribute('viewBox', big ? '-32 -29 64 58' : '-22 -21 44 42');
  k.innerHTML = (k.dataset.bipolar ? arc(-150, -6, 'track-arc') : arc(-150, a, 'value-arc')) +
    arc(a === -150 ? -144 : a + 9, 150, 'track-arc') +
    `<path class="hand-line" stroke-width="${sw}" d="M0 0L${pt(a, r)}"/>`;
}

/* Log-frequency grid and response curve */
let g = '';
for (let dec = 0; dec < 4; dec++) for (let n = 1; n < 10; n++) {
  const x = 100 + 165.5 * (dec - 1 + Math.log10(n));
  if (x < 6 || x > 432) continue;
  const nearLabel = n === 1 || n > 6;
  g += path(`M${x.toFixed(1)} 0V${nearLabel ? 228 : 256}`, n === 1 ? '#5a5a5a' : '#353535', n === 1 ? 3 : 2);
}
for (const y of [31, 64, 96, 129, 162, 194, 227]) g += path(`M0 ${y}H482`, y === 129 ? '#5a5a5a' : '#353535', 2);
for (const [x, t] of [[98, '100'], [264, '1k'], [430, '10k']]) g += `<text x="${x}" y="252" text-anchor="middle" font-size="23" font-weight="600" fill="#7c7c7c">${t}</text>`;
g += path('M0 129H149C190 129 225 126 255 115C275 108 285 99 293 99C303 99 311 110 318 126C332 158 344 178 356 197L394 258', '#53dcf8', 4);
g += '<circle cx="296" cy="172" r="14.500" fill="none" stroke="#ffb000" stroke-width="4"/>';
document.querySelector('.display').innerHTML = g;
```
